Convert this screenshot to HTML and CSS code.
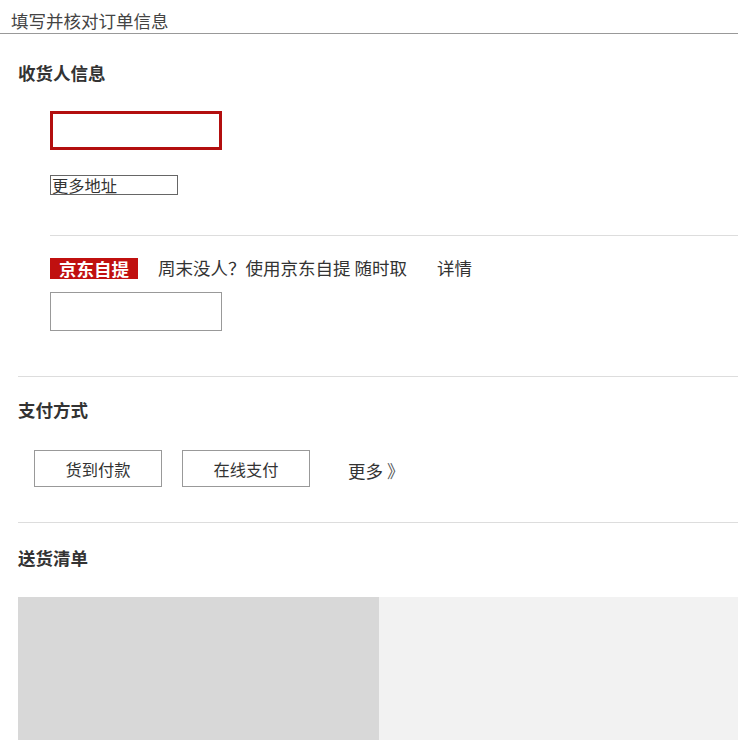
FILE: index.html
```html
<!DOCTYPE html>
<html lang="zh-CN">
<head>
<meta charset="utf-8">
<title>填写并核对订单信息</title>
<link rel="stylesheet" href="styles.css">
</head>
<body>
<header class="page-title">填写并核对订单信息</header>

<section class="block block-receiver">
  <h2 class="block-title">收货人信息</h2>
  <div class="receiver-body">
    <div class="addr-selected"></div>
    <div class="addr-more">更多地址</div>
    <div class="pickup">
      <div class="pickup-line">
        <span class="pickup-badge">京东自提</span>
        <span class="pickup-text">周末没人？使用京东自提 随时取</span>
        <span class="pickup-detail">详情</span>
      </div>
      <div class="pickup-input"></div>
    </div>
  </div>
</section>

<section class="block block-pay">
  <h2 class="block-title">支付方式</h2>
  <div class="pay-options">
    <button class="pay-btn" type="button">货到付款</button>
    <button class="pay-btn" type="button">在线支付</button>
    <span class="pay-more">更多<span class="pay-more-arrow">》</span></span>
  </div>
</section>

<section class="block block-ship">
  <h2 class="block-title">送货清单</h2>
  <div class="ship-list">
    <div class="ship-left"></div>
    <div class="ship-right"></div>
  </div>
</section>
</body>
</html>
```

FILE: styles.css
```css
html, body {
  margin: 0;
  padding: 0;
  background: #fff;
}
body {
  font-family: "Noto Sans CJK SC", "Noto Sans", sans-serif;
  color: #333;
  overflow: hidden;
  height: 740px;
}
.page-title {
  height: 34px;
  box-sizing: border-box;
  padding: 10px 0 0 11px;
  font-size: 17.5px;
  line-height: 22px;
  color: #444;
  border-bottom: 1px solid #999;
}
.block {
  margin-left: 18px;
  border-top: 1px solid #ddd;
}
.block-receiver {
  border-top: none;
  padding-top: 27px;
  padding-bottom: 45px;
}
.block-title {
  margin: 0;
  font-size: 17.5px;
  line-height: 24px;
  height: 24px;
  font-weight: bold;
  color: #333;
}
.receiver-body {
  margin-left: 32px;
  padding-top: 26px;
}
.addr-selected {
  width: 172px;
  height: 39px;
  box-sizing: border-box;
  border: 3px solid #b30f0f;
}
.addr-more {
  margin-top: 25px;
  width: 128px;
  height: 20px;
  box-sizing: border-box;
  border: 1px solid #666;
  font-size: 16.25px;
  line-height: 19px;
  padding-left: 1px;
  color: #333;
}
.pickup {
  margin-top: 40px;
  border-top: 1px solid #ddd;
  padding-top: 21px;
}
.pickup-line {
  display: flex;
  align-items: center;
  height: 22px;
}
.pickup-badge {
  width: 88px;
  height: 21px;
  background: #c0100f;
  color: #fff;
  font-weight: bold;
  font-size: 17.5px;
  line-height: 21px;
  text-align: center;
}
.pickup-text {
  margin-left: 20px;
  font-size: 17.5px;
  line-height: 22px;
}
.pickup-detail {
  margin-left: 30px;
  font-size: 17.5px;
  line-height: 22px;
}
.pickup-input {
  margin-top: 13px;
  width: 172px;
  height: 39px;
  box-sizing: border-box;
  border: 1px solid #999;
}
.block-pay {
  padding-top: 21px;
  padding-bottom: 35px;
}
.pay-options {
  margin-top: 28px;
  margin-left: 16px;
  display: flex;
  align-items: center;
}
.pay-btn {
  width: 128px;
  height: 37px;
  box-sizing: border-box;
  border: 1px solid #999;
  background: #fff;
  font-family: inherit;
  font-size: 16.25px;
  color: #333;
  padding: 0;
  margin: 0 20px 0 0;
}
.pay-more {
  margin-left: 18px;
  font-size: 17.5px;
  color: #333;
  padding-top: 4px;
}
.pay-more-arrow {
  margin-left: 4px;
  color: #555;
}
.block-ship {
  padding-top: 23px;
}
.ship-list {
  margin-top: 27px;
  display: flex;
  height: 143px;
}
.ship-left {
  width: 361px;
  background: #d8d8d8;
}
.ship-right {
  flex: 1;
  background: #f2f2f2;
}
```
